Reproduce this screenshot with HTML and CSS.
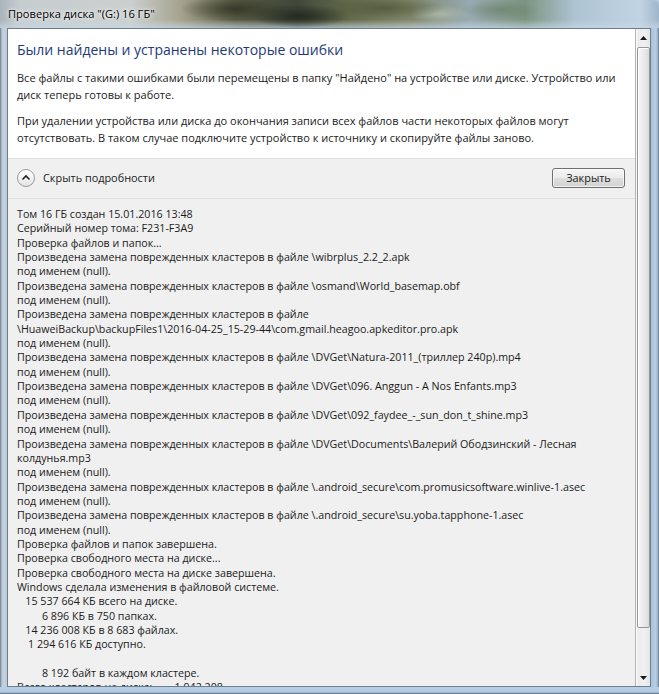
FILE: index.html
```html
<!DOCTYPE html>
<html lang="ru">
<head>
<meta charset="utf-8">
<title>Проверка диска</title>
<link rel="stylesheet" href="styles.css">
</head>
<body>
<div class="window">
  <div class="titlebar"><span class="title">Проверка диска "(G:) 16 ГБ"</span></div>
  <div class="frame-row">
    <div class="frame-side frame-left"></div>
    <div class="client">
      <div class="content">
        <div class="main">
          <h1 class="instruction">Были найдены и устранены некоторые ошибки</h1>
          <p class="para">Все файлы с такими ошибками были перемещены в папку "Найдено" на устройстве или диске. Устройство или<br>диск теперь готовы к работе.</p>
          <p class="para">При удалении устройства или диска до окончания записи всех файлов части некоторых файлов могут<br>отсутствовать. В таком случае подключите устройство к источнику и скопируйте файлы заново.</p>
        </div>
        <div class="footer">
          <div class="toggle">
            <span class="chev"><svg width="10" height="7" viewBox="0 0 10 7"><path d="M1.5 5.5 L5 2 L8.5 5.5" fill="none" stroke="#222" stroke-width="1.6"/></svg></span>
            <span class="toggle-text">Скрыть подробности</span>
          </div>
          <div class="btn">Закрыть</div>
        </div>
        <div class="log">
          <div class="ln">Том 16 ГБ создан 15.01.2016 13:48</div>
          <div class="ln">Серийный номер тома: F231-F3A9</div>
          <div class="ln">Проверка файлов и папок...</div>
          <div class="ln">Произведена замена поврежденных кластеров в файле \wibrplus_2.2_2.apk</div>
          <div class="ln">под именем (null).</div>
          <div class="ln">Произведена замена поврежденных кластеров в файле \osmand\World_basemap.obf</div>
          <div class="ln">под именем (null).</div>
          <div class="ln">Произведена замена поврежденных кластеров в файле</div>
          <div class="ln">\HuaweiBackup\backupFiles1\2016-04-25_15-29-44\com.gmail.heagoo.apkeditor.pro.apk</div>
          <div class="ln">под именем (null).</div>
          <div class="ln">Произведена замена поврежденных кластеров в файле \DVGet\Natura-2011_(триллер 240p).mp4</div>
          <div class="ln">под именем (null).</div>
          <div class="ln">Произведена замена поврежденных кластеров в файле \DVGet\096. Anggun - A Nos Enfants.mp3</div>
          <div class="ln">под именем (null).</div>
          <div class="ln">Произведена замена поврежденных кластеров в файле \DVGet\092_faydee_-_sun_don_t_shine.mp3</div>
          <div class="ln">под именем (null).</div>
          <div class="ln">Произведена замена поврежденных кластеров в файле \DVGet\Documents\Валерий Ободзинский - Лесная</div>
          <div class="ln">колдунья.mp3</div>
          <div class="ln">под именем (null).</div>
          <div class="ln">Произведена замена поврежденных кластеров в файле \.android_secure\com.promusicsoftware.winlive-1.asec</div>
          <div class="ln">под именем (null).</div>
          <div class="ln">Произведена замена поврежденных кластеров в файле \.android_secure\su.yoba.tapphone-1.asec</div>
          <div class="ln">под именем (null).</div>
          <div class="ln">Проверка файлов и папок завершена.</div>
          <div class="ln">Проверка свободного места на диске...</div>
          <div class="ln">Проверка свободного места на диске завершена.</div>
          <div class="ln">Windows сделала изменения в файловой системе.</div>
          <div class="ln">   15 537 664 КБ всего на диске.</div>
          <div class="ln">         6 896 КБ в 750 папках.</div>
          <div class="ln">   14 236 008 КБ в 8 683 файлах.</div>
          <div class="ln">    1 294 616 КБ доступно.</div>
          <div class="ln"> </div>
          <div class="ln">         8 192 байт в каждом кластере.</div>
          <div class="ln">Всего кластеров на диске:        1 942 208</div>
        </div>
      </div>
      <div class="scrollbar">
        <div class="arrow"><svg width="7" height="4" viewBox="0 0 7 4"><polygon points="0,4 7,4 3.5,0" fill="#1a1a1a"/></svg></div>
        <div class="thumb"></div>
        <div class="track"></div>
        <div class="arrow"><svg width="7" height="4" viewBox="0 0 7 4"><polygon points="0,0 7,0 3.5,4" fill="#1a1a1a"/></svg></div>
      </div>
    </div>
    <div class="frame-side frame-right"></div>
  </div>
  <div class="frame-bottom"></div>
</div>
</body>
</html>
```

FILE: styles.css
```css
* { box-sizing: border-box; }
html, body { margin: 0; padding: 0; }
body {
  width: 659px;
  height: 694px;
  overflow: hidden;
  font-family: "Open Sans", "Noto Sans", sans-serif;
  font-size: 10.7px;
  color: #1b1b1b;
  background: #9fb6cb;
}
.window {
  width: 659px;
  height: 694px;
  display: flex;
  flex-direction: column;
  background: #b5cbe0;
}
.titlebar {
  height: 28px;
  flex: none;
  display: flex;
  align-items: center;
  padding: 0 0 2px 8px;
  border-radius: 0 6px 0 0;
  background:
    radial-gradient(ellipse 55px 13px at 235px 9px, rgba(45,48,32,.8), transparent),
    radial-gradient(ellipse 50px 12px at 300px 16px, rgba(28,34,24,.8), transparent),
    radial-gradient(ellipse 60px 11px at 385px 8px, rgba(72,82,48,.7), transparent),
    radial-gradient(ellipse 30px 9px at 440px 14px, rgba(190,200,180,.6), transparent),
    radial-gradient(ellipse 40px 10px at 500px 10px, rgba(100,120,90,.55), transparent),
    linear-gradient(180deg, rgba(255,255,255,0) 70%, rgba(200,215,228,.7) 100%),
    linear-gradient(90deg, #a9b4ba 0, #c6cdcf 20px, #cbd0cf 130px, #a6a490 180px, #5f6149 235px, #40473a 295px, #646b4c 350px, #80866a 410px, #97aab2 470px, #7b9480 525px, #aec3d2 575px, #c2d4e3 640px, #9fb6cb 659px);
}
.title {
  font-size: 11.1px;
  color: #000;
  text-shadow: 0 0 6px rgba(255,255,255,.9), 0 0 3px rgba(255,255,255,.9);
}
.frame-row {
  flex: 1;
  min-height: 0;
  display: flex;
}
.frame-side { flex: none; }
.frame-left {
  width: 7px;
  background: linear-gradient(90deg, #5e6f7e 0, #9fb2c2 1px, #c5d3de 3px, #bccbd8 7px);
}
.frame-right {
  width: 8px;
  background: linear-gradient(90deg, #a9c3db 0, #b7cfe5 5px, #8ea8c0 7px, #5e6f7e 8px);
}
.frame-bottom {
  height: 7px;
  flex: none;
  background: linear-gradient(180deg, #b7cfe4 0, #b3cce2 5px, #5e6f7e 7px);
}
.client {
  flex: 1;
  min-width: 0;
  display: flex;
  border: 1px solid #6c7d8d;
  background: #f0f0f0;
  overflow: hidden;
}
.content {
  flex: 1;
  min-width: 0;
  display: flex;
  flex-direction: column;
  overflow: hidden;
}
.main {
  flex: none;
  background: #fff;
  padding: 11px 9px 12px;
  height: 129px;
}
.instruction {
  margin: 0 0 10px;
  font-size: 14px;
  font-weight: normal;
  line-height: 20px;
  color: #1e3a78;
  white-space: nowrap;
}
.para {
  margin: 0 0 10px;
  font-size: 11px;
  line-height: 16.5px;
  white-space: nowrap;
}
.footer {
  flex: none;
  height: 40px;
  border-top: 1px solid #dfdfdf;
  display: flex;
  justify-content: space-between;
  align-items: center;
  padding: 0 10px 2px 9px;
}
.toggle {
  display: flex;
  align-items: center;
  gap: 8px;
}
.chev {
  width: 18px;
  height: 18px;
  border-radius: 50%;
  border: 1px solid #9a9a9a;
  background: linear-gradient(180deg, #ffffff 0, #f3f3f3 50%, #e2e2e2 100%);
  display: flex;
  align-items: center;
  justify-content: center;
  padding-bottom: 1px;
}
.toggle-text { color: #1b1b1b; font-size: 10.9px; }
.btn {
  width: 73px;
  height: 20px;
  border: 1px solid #707070;
  border-radius: 3px;
  background: linear-gradient(180deg, #f6f6f6 0, #ebebeb 48%, #dedede 52%, #d2d2d2 100%);
  box-shadow: inset 0 0 0 1px rgba(255,255,255,.7);
  display: flex;
  align-items: center;
  justify-content: center;
  color: #1b1b1b;
  font-size: 10.9px;
}
.log {
  flex: 1;
  min-height: 0;
  overflow: hidden;
  border-top: 1px solid #dfdfdf;
  padding: 8px 9px 0;
}
.ln {
  line-height: 14.35px;
  height: 14.35px;
  white-space: pre;
}
.scrollbar {
  flex: none;
  width: 15px;
  border-left: 1px solid #b4b4b4;
  background: linear-gradient(90deg, #fdfdfd 0, #ececec 2px, #f0f0f0 60%, #e6e6e6 100%);
  display: flex;
  flex-direction: column;
}
.arrow {
  flex: none;
  height: 17px;
  display: flex;
  align-items: center;
  justify-content: center;
}
.thumb {
  flex: none;
  height: 581px;
  margin: 1px 0 0 1px;
  border: 1px solid #979797;
  border-radius: 2px;
  background: linear-gradient(90deg, #f7f7f7 0, #ececec 45%, #dcdcdc 100%);
  box-shadow: inset 1px 1px 0 #fff;
}
.track { flex: 1; }
```
